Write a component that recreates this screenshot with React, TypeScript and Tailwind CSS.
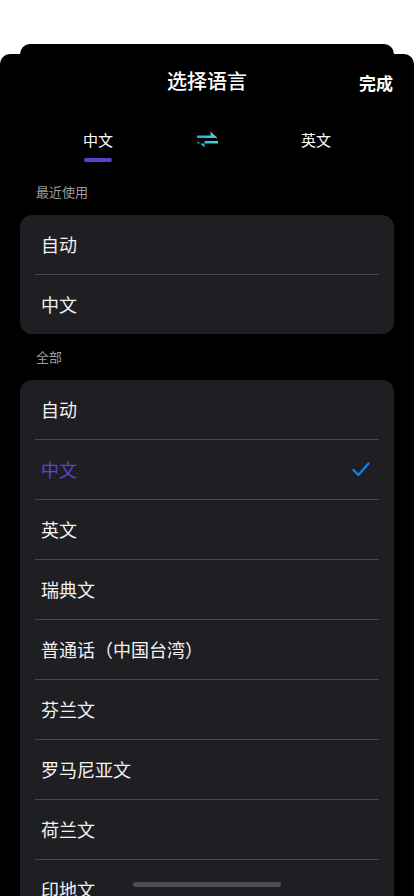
import React from "react";

const recent = ["自动", "中文"];
const all = ["自动", "中文", "英文", "瑞典文", "普通话（中国台湾）", "芬兰文", "罗马尼亚文", "荷兰文", "印地文"];

function SwapIcon() {
  return (
    <svg width="21" height="17" viewBox="0 0 21 17">
      <defs>
        <linearGradient id="g" x1="0" y1="0" x2="1" y2="0">
          <stop offset="0" stopColor="#2aa6d6" />
          <stop offset="1" stopColor="#4cd2e8" />
        </linearGradient>
      </defs>
      <polygon points="0,4.5 13.5,4.5 13.5,0.5 20.5,7 0,7" fill="url(#g)" />
      <polygon points="21,10 7.5,10 7.5,16.5 0.5,10 0.5,10 0.5,12.5 21,12.5" fill="url(#g)" />
    </svg>
  );
}

function Row({ label, active, last }: { label: string; active?: boolean; last?: boolean }) {
  return (
    <div className="px-[15px]">
      <div className={`flex items-center justify-between pl-[6px] pr-[9px] ${last ? "h-[59px]" : "h-[60px] border-b border-[#48474d]"}`}>
        <span className={`text-[18px] ${active ? "text-[#5b45d8]" : "text-[#f2f2f2]"}`}>{label}</span>
        {active && (
          <svg width="18" height="15" viewBox="0 0 18 15">
            <path d="M1.5 8 L6.5 13 L16.5 1.5" fill="none" stroke="#0f80f7" strokeWidth="2.3" strokeLinecap="round" strokeLinejoin="round" />
          </svg>
        )}
      </div>
    </div>
  );
}

export default function App() {
  return (
    <div
      className="relative h-[896px] w-[414px] overflow-hidden bg-white"
      style={{ fontFamily: '"Noto Sans CJK SC", "Noto Sans", sans-serif' }}
    >
      <div className="mx-[20px] mt-[44px] h-[20px] rounded-t-[10px] bg-black" />
      <div className="-mt-[10px] h-[900px] rounded-t-[10px] bg-black">
        <div className="relative flex h-[54px] items-center justify-center">
          <span className="text-[20px] font-medium text-white">选择语言</span>
          <span className="absolute right-[21px] top-[16px] text-[17px] font-semibold text-white">完成</span>
        </div>
        <div className="flex h-[54px] items-start pt-[20px]">
          <div className="flex w-[196px] flex-col items-center">
            <span className="text-[15px] leading-[24px] text-white">中文</span>
            <div className="mt-[6px] h-[4px] w-[28px] rounded-full bg-[#5a3fd4]" />
          </div>
          <div className="flex w-[22px] justify-center pt-[3px]">
            <SwapIcon />
          </div>
          <div className="flex w-[196px] flex-col items-center">
            <span className="text-[15px] leading-[24px] text-white">英文</span>
          </div>
        </div>
        <div className="flex h-[53px] items-center pl-[36px] pt-[6px] text-[13px] text-[#9c9ca1]">最近使用</div>
        <div className="mx-[20px] overflow-hidden rounded-[12px] bg-[#1f1e23]">
          {recent.map((l, i) => (
            <Row key={i} label={l} last={i === recent.length - 1} />
          ))}
        </div>
        <div className="flex h-[46px] items-center pl-[36px] text-[13px] text-[#9c9ca1]">全部</div>
        <div className="mx-[20px] rounded-[12px] bg-[#1f1e23]">
          {all.map((l, i) => (
            <Row key={i} label={l} active={i === 1} last={i === all.length - 1} />
          ))}
        </div>
      </div>
      <div className="absolute left-[133px] top-[882px] h-[5px] w-[148px] rounded-full bg-[#4d4d50]" />
    </div>
  );
}
